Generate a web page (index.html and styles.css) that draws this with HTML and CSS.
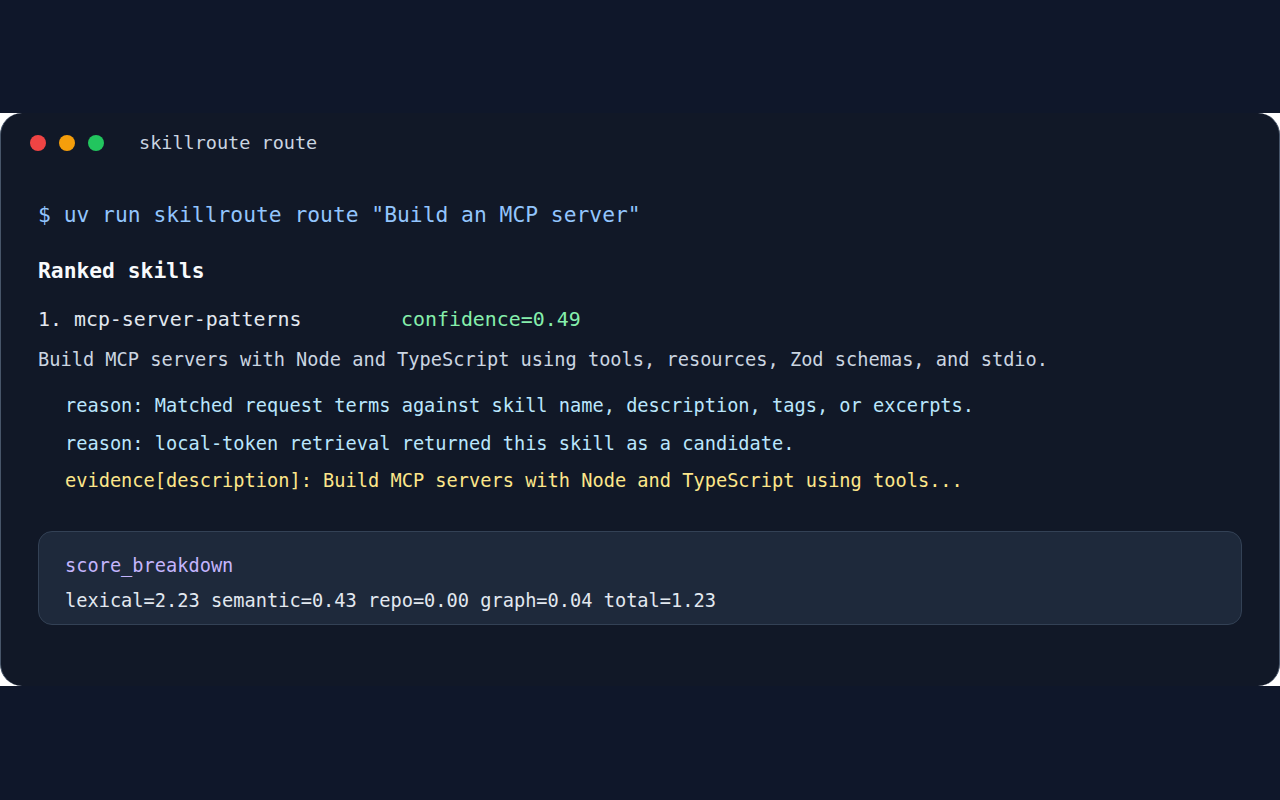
FILE: index.html
```html
<!DOCTYPE html>
<html lang="en">
<head>
<meta charset="utf-8">
<title>skillroute route</title>
<link rel="stylesheet" href="styles.css">
</head>
<body>
<div class="stage">
  <div class="frame">
    <section class="terminal">
      <header class="term-head">
        <span class="dot dot-red"></span>
        <span class="dot dot-amber"></span>
        <span class="dot dot-green"></span>
        <span class="term-title">skillroute route</span>
      </header>
      <div class="term-body">
        <div class="cmd">$ uv run skillroute route "Build an MCP server"</div>
        <div class="heading">Ranked skills</div>
        <div class="item">
          <span class="item-name">1. mcp-server-patterns</span>
          <span class="confidence">confidence=0.49</span>
        </div>
        <div class="desc">Build MCP servers with Node and TypeScript using tools, resources, Zod schemas, and stdio.</div>
        <ul class="reasons">
          <li class="reason">reason: Matched request terms against skill name, description, tags, or excerpts.</li>
          <li class="reason">reason: local-token retrieval returned this skill as a candidate.</li>
          <li class="evidence">evidence[description]: Build MCP servers with Node and TypeScript using tools...</li>
        </ul>
        <div class="score">
          <div class="score-label">score_breakdown</div>
          <div class="score-values">lexical=2.23 semantic=0.43 repo=0.00 graph=0.04 total=1.23</div>
        </div>
      </div>
    </section>
  </div>
</div>
</body>
</html>
```

FILE: styles.css
```css
* { box-sizing: border-box; }

html, body {
  margin: 0;
  padding: 0;
}

body {
  background: #0f172a;
  width: 1280px;
  height: 800px;
  overflow: hidden;
  font-family: "DejaVu Sans Mono", "Liberation Mono", monospace;
}

.stage {
  padding-top: 113px;
}

.frame {
  background: #ffffff;
}

.terminal {
  background: #111827;
  border-radius: 22px;
  border-left: 1px solid #475569;
  border-right: 1px solid #475569;
  padding: 0 37px 61px 37px;
}

.term-head {
  height: 58px;
  display: flex;
  align-items: center;
  margin-left: -8px;
  padding-top: 1px;
}

.dot {
  width: 16px;
  height: 16px;
  border-radius: 50%;
  margin-right: 13px;
  flex: none;
}
.dot-red { background: #ef4444; }
.dot-amber { background: #f59e0b; }
.dot-green { background: #22c55e; }

.term-title {
  margin-left: 22px;
  color: #cbd5e1;
  font-size: 18.5px;
  line-height: 30px;
}

.term-body {
  display: flex;
  flex-direction: column;
}

.cmd {
  margin-top: 29px;
  font-size: 21.3px;
  line-height: 30px;
  color: #93c5fd;
  white-space: pre;
}

.heading {
  margin-top: 26px;
  font-size: 21.3px;
  line-height: 30px;
  font-weight: bold;
  color: #f8fafc;
}

.item {
  margin-top: 19px;
  display: flex;
  font-size: 19.9px;
  line-height: 30px;
}

.item-name {
  color: #e2e8f0;
  width: 363px;
  flex: none;
}

.confidence {
  color: #86efac;
}

.desc {
  margin-top: 10px;
  font-size: 18.65px;
  line-height: 30px;
  color: #cbd5e1;
}

.reasons {
  list-style: none;
  margin: 12px 0 0 0;
  padding: 0 0 0 27px;
  font-size: 18.65px;
  line-height: 37.5px;
}

.reason { color: #bae6fd; }
.evidence { color: #fde68a; }

.score {
  margin-top: 31px;
  background: #1e293b;
  border: 1px solid #334155;
  border-radius: 14px;
  padding: 19px 26px 8px 26px;
  font-size: 18.65px;
  line-height: 30px;
}

.score-label {
  color: #c4b5fd;
}

.score-values {
  margin-top: 5px;
  color: #e2e8f0;
}
```
